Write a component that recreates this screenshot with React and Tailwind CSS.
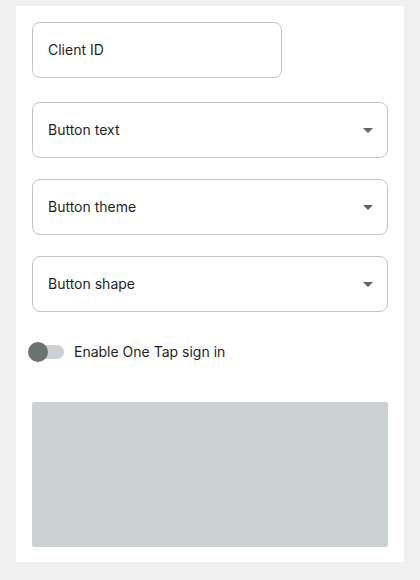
export default function App() {
  const selects = ['Button text', 'Button theme', 'Button shape']

  return (
    <div className="min-h-[580px] bg-[#f0f0f0] px-4 pt-[6px] pb-[18px]" style={{ fontFamily: 'Inter, Roboto, "Liberation Sans", sans-serif' }}>
      <div className="bg-white px-4 pt-4 pb-[15px]">
        {/* Client ID */}
        <div className="w-[250px] h-[56px] border border-[#c4c4c4] rounded-[8px] flex items-center px-[15px] pb-[2px] text-[14px] text-[#1f1f1f]">
          Client ID
        </div>

        {/* Selects */}
        <div className="mt-6 flex flex-col gap-[21px]">
          {selects.map((label) => (
            <div key={label} className="h-[56px] border border-[#c4c4c4] rounded-[8px] flex items-center justify-between pl-[15px] pr-[14px] text-[14px] text-[#1f1f1f]">
              <span className="-mt-[2px]">{label}</span>
              <svg width="10" height="5" viewBox="0 0 10 5">
                <path d="M0 0h10L5 5z" fill="#5f6368" />
              </svg>
            </div>
          ))}
        </div>

        {/* One Tap toggle */}
        <div className="mt-7 -ml-1 flex items-center h-6">
          <div className="relative w-9 h-[14px]">
            <div className="absolute left-[2px] right-0 top-0 h-[14px] rounded-full bg-[#ccd0d2]" />
            <div className="absolute left-0 top-[-3px] w-5 h-5 rounded-full bg-[#6b7270]" />
          </div>
          <span className="ml-[10px] -mt-[2px] text-[14px] text-[#1f1f1f]">Enable One Tap sign in</span>
        </div>

        {/* Preview */}
        <div className="mt-[38px] h-[145px] rounded-[2px] bg-[#ccd1d4]" />
      </div>
    </div>
  )
}
